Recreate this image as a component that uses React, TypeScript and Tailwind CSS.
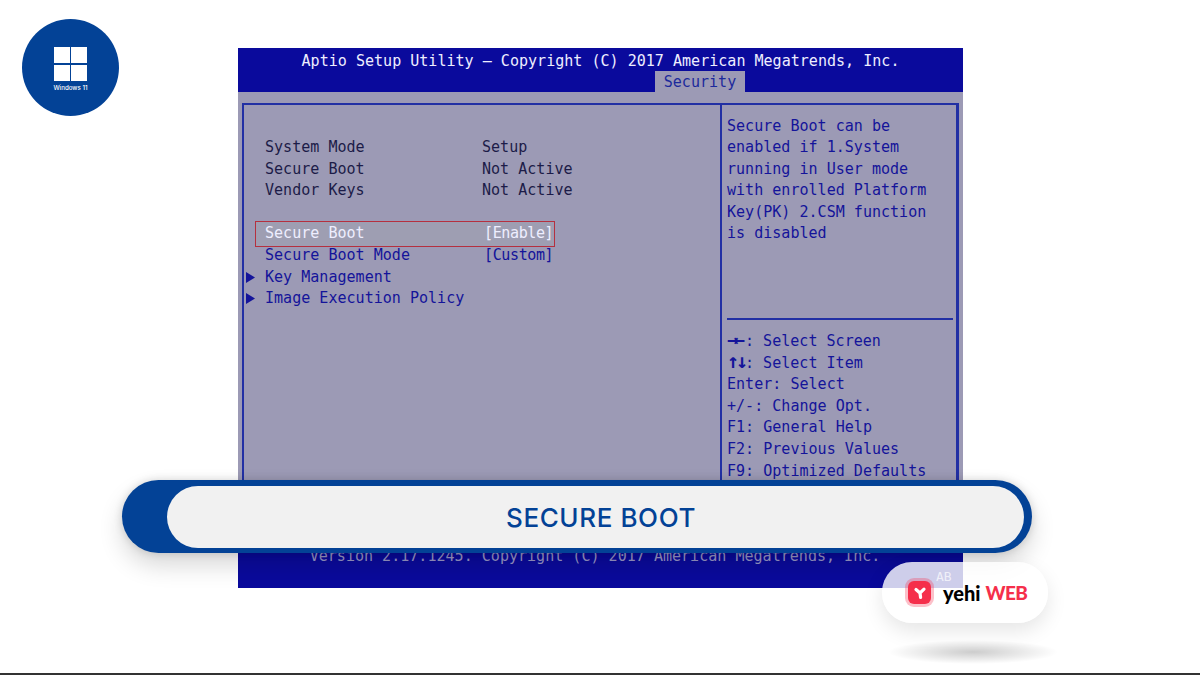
const mono = "font-['DejaVu_Sans_Mono',monospace] text-[15.05px] leading-[21.6px] whitespace-pre";

function WindowsLogo() {
  return (
    <div className="flex h-[97px] w-[97px] shrink-0 flex-col items-center rounded-full bg-[#034296] pt-[28px]">
      <div className="grid h-[34px] w-[33px] grid-cols-2 gap-[1.5px]">
        <div className="bg-white" />
        <div className="bg-white" />
        <div className="bg-white" />
        <div className="bg-white" />
      </div>
      <span className="mt-[2px] font-['Inter',sans-serif] text-[6.2px] leading-[9px] font-medium whitespace-nowrap text-white">Windows 11</span>
    </div>
  );
}

function Row({ label, value }: { label: string; value: string }) {
  return (
    <div className="flex">
      <span className="w-[217px] shrink-0">{label}</span>
      <span>{value}</span>
    </div>
  );
}

function MenuRow({ label }: { label: string }) {
  return (
    <div className="relative text-[#14149a]">
      <svg className="absolute top-[5px] -left-[19px]" width="9" height="11" viewBox="0 0 9 11">
        <polygon points="0,0 9,5.5 0,11" fill="#14149a" />
      </svg>
      {label}
    </div>
  );
}

function BiosScreen() {
  return (
    <div className="ml-[119px] mt-[48px] flex h-[540px] w-[725px] shrink-0 flex-col bg-[#9c9ab5]">
      <div className={`relative h-[44px] shrink-0 bg-[#0a0a9c] pt-[3px] text-center text-[#eeeeff] ${mono}`}>
        Aptio Setup Utility – Copyright (C) 2017 American Megatrends, Inc.
        <div className="absolute top-[23px] left-[417px] flex h-[21px] w-[90px] items-center justify-center bg-[#9c9ab5] pt-[2px] text-[#1c2a9c]">Security</div>
      </div>

      <div className="flex min-h-0 flex-1 flex-col px-[4px] pt-[11px]">
        <div className="flex min-h-0 flex-1 border-t-2 border-r-[3px] border-l-2 border-[#2230a4]">
          <div className={`w-[478px] shrink-0 border-r-2 border-[#2230a4] pt-[32px] pl-[21px] ${mono}`}>
            <div className="text-[#1c1c48]">
              <Row label="System Mode" value="Setup" />
              <Row label="Secure Boot" value="Not Active" />
              <Row label="Vendor Keys" value="Not Active" />
            </div>
            <div className="h-[21.6px]" />
            <div className="relative text-[#eeeeff]">
              <div className="absolute -top-[2px] right-[165px] -bottom-[2px] -left-[10px] border-[1.5px] border-[#b5303f] bg-[#9e9eb2]" />
              <div className="relative flex">
                <span className="w-[219px] shrink-0">Secure Boot</span>
                <span className="tracking-[-0.4px]">[Enable]</span>
              </div>
            </div>
            <div className="flex text-[#14149a]">
              <span className="w-[219px] shrink-0">Secure Boot Mode</span>
              <span className="tracking-[-0.4px]">[Custom]</span>
            </div>
            <MenuRow label="Key Management" />
            <MenuRow label="Image Execution Policy" />
          </div>

          <div className={`flex min-w-0 flex-1 flex-col text-[#14149a] ${mono}`}>
            <div className="h-[213px] shrink-0 pt-[10.5px] pl-[5px]">
              <div>Secure Boot can be</div>
              <div>enabled if 1.System</div>
              <div>running in User mode</div>
              <div>with enrolled Platform</div>
              <div>Key(PK) 2.CSM function</div>
              <div>is disabled</div>
            </div>
            <div className="mr-[3px] ml-[5px] border-t-2 border-[#2230a4]" />
            <div className="pt-[11px] pl-[5px]">
              <div><span className="inline-block w-[18px] text-[19px] leading-[15px] font-bold tracking-[-5px]">→←</span>: Select Screen</div>
              <div><span className="inline-block w-[18px] text-[20px] leading-[15px] font-bold tracking-[-3px]">↑↓</span>: Select Item</div>
              <div>Enter: Select</div>
              <div>+/-: Change Opt.</div>
              <div>F1: General Help</div>
              <div>F2: Previous Values</div>
              <div>F9: Optimized Defaults</div>
            </div>
          </div>
        </div>
      </div>

      <div className={`h-[40px] shrink-0 bg-[#0a0a9c] pr-[11px] text-center !leading-[17px] text-[#9896c8] ${mono}`}>
        Version 2.17.1245. Copyright (C) 2017 American Megatrends, Inc.
      </div>
    </div>
  );
}

function YehiBadge() {
  return (
    <>
      <div className="absolute top-[562px] left-[882px] flex h-[61px] w-[166px] items-center rounded-[30px] bg-white/80 pl-[26px] shadow-[0_8px_20px_rgba(0,0,0,0.1)]">
        <span className="absolute top-[9px] left-[54px] font-['DejaVu_Sans_Mono',monospace] text-[13px] leading-[12px] text-white/70">AB</span>
        <div className="flex h-[23px] w-[23px] shrink-0 items-center justify-center rounded-[6px] bg-[#f52f4b] shadow-[0_0_0_3px_rgba(245,47,75,0.3)]">
          <svg width="14" height="14" viewBox="0 0 14 14">
            <path d="M3 3.5 L7 7 L11 3.2 M7 7 L7.6 11.5" stroke="#fff" strokeWidth="3.2" strokeLinecap="round" fill="none" />
          </svg>
        </div>
        <span className="ml-[12px] font-['Lato',sans-serif] text-[20px] leading-none font-black text-black">yehi</span>
        <span className="ml-[5px] font-['Lato',sans-serif] text-[19px] leading-none font-black tracking-[-0.6px] text-[#f52f4b]">WEB</span>
      </div>
      <div className="absolute top-[640px] left-[888px] h-[24px] w-[170px] bg-[radial-gradient(closest-side,rgba(0,0,0,0.2),transparent)]" />
    </>
  );
}

export default function App() {
  return (
    <div className="relative flex h-[675px] w-[1200px] items-start overflow-hidden border-b-2 border-[#333] bg-white pl-[22px]">
      <div className="mt-[19px]">
        <WindowsLogo />
      </div>
      <BiosScreen />

      <div className="absolute top-[480px] left-[122px] h-[73px] w-[910px] rounded-[37px] bg-[#034296] shadow-[0_12px_24px_rgba(0,0,0,0.16),0_0_8px_rgba(0,0,0,0.15)]">
        <div className="absolute top-[6px] right-[8px] bottom-[5px] left-[45px] flex items-center justify-center rounded-[31px] bg-[#f1f1f1] pl-[11px]">
          <span className="font-['Inter',sans-serif] text-[26px] font-medium tracking-[0.6px] text-[#034296]">SECURE BOOT</span>
        </div>
      </div>

      <YehiBadge />
    </div>
  );
}
